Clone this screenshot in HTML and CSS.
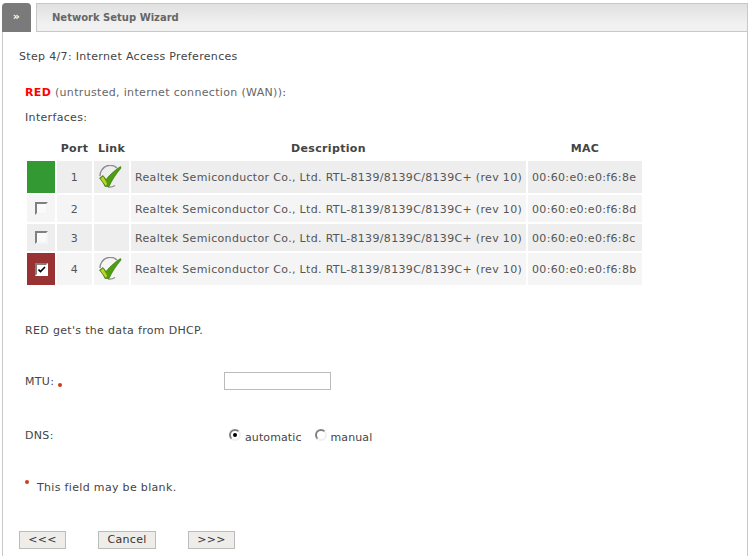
FILE: index.html
```html
<!DOCTYPE html>
<html lang="en">
<head>
<meta charset="utf-8">
<title>Network Setup Wizard</title>
<link rel="stylesheet" href="styles.css">
</head>
<body>
<div class="head">
  <div class="tab">»</div>
  <div class="title">Network Setup Wizard</div>
</div>
<main class="content">
  <p class="step">Step 4/7: Internet Access Preferences</p>
  <section class="zone">
    <p class="zone-title"><b class="red">RED</b> <span class="muted">(untrusted, internet connection (WAN))</span>:</p>
    <p class="ifaces">Interfaces:</p>
    <table class="nics">
      <thead>
        <tr><th class="c-sel"></th><th class="c-port">Port</th><th class="c-link">Link</th><th class="c-desc">Description</th><th class="c-mac">MAC</th></tr>
      </thead>
      <tbody>
        <tr class="odd tall">
          <td class="green"></td><td class="port">1</td>
          <td class="link"><svg class="ok" viewBox="0 0 24 24" width="24" height="24"><path d="M19 3A10 10 0 0 0 3.500 5.500 10 10 0 0 0 2 11M10 22a10 10 0 0 0 7-1.500" fill="none" stroke="#8c8c8c" stroke-width="1.400"/><path d="M1.500 13l3.500-2.500 3 4C12 9.500 17 5 22.500 1.500L23 3C18 9 14 15 11 21.500H7C5.500 18 3.500 15.500 1.500 13z" fill="#4f9e0b" stroke="#2f6a0a" stroke-width=".6"/><path d="M2.500 13.500l2.500-2 4 7-1 2.500z" fill="#c9d02a"/></svg></td>
          <td>Realtek Semiconductor Co., Ltd. RTL-8139/8139C/8139C+ (rev 10)</td><td>00:60:e0:e0:f6:8e</td>
        </tr>
        <tr class="even">
          <td class="sel"><span class="box"></span></td><td class="port">2</td><td class="link"></td>
          <td>Realtek Semiconductor Co., Ltd. RTL-8139/8139C/8139C+ (rev 10)</td><td>00:60:e0:e0:f6:8d</td>
        </tr>
        <tr class="odd">
          <td class="sel"><span class="box"></span></td><td class="port">3</td><td class="link"></td>
          <td>Realtek Semiconductor Co., Ltd. RTL-8139/8139C/8139C+ (rev 10)</td><td>00:60:e0:e0:f6:8c</td>
        </tr>
        <tr class="even tall">
          <td class="sel maroon"><span class="box on"><svg viewBox="0 0 8 8" width="8" height="8"><path d="M.5 4.500l2 2L7 2" fill="none" stroke="#000" stroke-width="1.600"/></svg></span></td><td class="port">4</td>
          <td class="link"><svg class="ok" viewBox="0 0 24 24" width="24" height="24"><path d="M19 3A10 10 0 0 0 3.500 5.500 10 10 0 0 0 2 11M10 22a10 10 0 0 0 7-1.500" fill="none" stroke="#8c8c8c" stroke-width="1.400"/><path d="M1.500 13l3.500-2.500 3 4C12 9.500 17 5 22.500 1.500L23 3C18 9 14 15 11 21.500H7C5.500 18 3.500 15.500 1.500 13z" fill="#4f9e0b" stroke="#2f6a0a" stroke-width=".6"/><path d="M2.500 13.500l2.500-2 4 7-1 2.500z" fill="#c9d02a"/></svg></td>
          <td>Realtek Semiconductor Co., Ltd. RTL-8139/8139C/8139C+ (rev 10)</td><td>00:60:e0:e0:f6:8b</td>
        </tr>
      </tbody>
    </table>
    <p class="dhcp">RED get's the data from DHCP.</p>
    <div class="row mtu">
      <label class="lbl">MTU: <i class="dot"></i></label>
      <span class="field"></span>
    </div>
    <div class="row dns">
      <label class="lbl">DNS:</label>
      <div class="radios">
        <span class="radio on"></span><span class="opt">automatic</span>
        <span class="radio"></span><span class="opt">manual</span>
      </div>
    </div>
    <p class="note"><i class="dot"></i><span>This field may be blank.</span></p>
  </section>
  <div class="buttons">
    <span class="btn b-prev">&lt;&lt;&lt;</span>
    <span class="btn b-cancel">Cancel</span>
    <span class="btn b-next">&gt;&gt;&gt;</span>
  </div>
</main>
</body>
</html>
```
FILE: styles.css
```css
html, body { margin: 0; padding: 0; background: #fff; }
body {
  width: 752px; height: 556px; overflow: hidden;
  font: 11px/14px "DejaVu Sans", sans-serif;
  letter-spacing: .33px;
  color: #444;
}
p { margin: 0; }
.head { display: flex; height: 29px; margin: 3px 4px 0 2px; }
.tab {
  width: 29px; background: #7a7a7a; color: #fff; border-radius: 4px 4px 0 0;
  text-align: center; font-weight: bold; font-size: 11px; line-height: 28px;
}
.title {
  flex: 1; margin-left: 5px; padding-left: 15px;
  border: 1px solid #c8c8c8;
  background: linear-gradient(#e0e0e0, #f1f1f1 75%);
  font-weight: bold; font-size: 10px; letter-spacing: 0; line-height: 27px; color: #666;
}
.content {
  margin: 0 4px 0 2px; height: 524px; box-sizing: border-box;
  border: 1px solid #c8c8c8; border-top: 0; border-bottom: 0;
  padding: 18px 0 0 16px;
}
.step { color: #444; }
.zone { padding: 22px 0 0 6px; }
.red { color: #f00; }
.muted { color: #666; }
.ifaces { margin-top: 11px; }
.nics { margin: 11px 0 0 0; border-collapse: separate; border-spacing: 2px; table-layout: fixed; width: 617px; }
.nics th { height: 21px; padding: 0; color: #444; text-align: center; vertical-align: middle; }
.c-sel { width: 28px; } .c-port { width: 35px; } .c-link { width: 35px; } .c-desc { width: 395px; } .c-mac { width: 114px; }
.nics td { box-sizing: border-box; height: 27px; padding: 2px 0 0 4px; color: #555; white-space: nowrap; }
.nics td.port { text-align: center; padding: 2px 0 0; }
.nics td.link, .nics td.sel, .nics td.green { padding: 0; }
.nics tr.tall td { height: 32px; }
.odd td { background: #eee; }
.even td { background: #f5f5f5; }
.nics td.green { background: #339933; }
.nics td.maroon { background: #993333; }
.ok { display: block; margin: 0 0 0 4px; }
.sel { vertical-align: middle; }
.box {
  display: flex; align-items: center; justify-content: center;
  width: 9px; height: 9px; margin: 0 0 0 8px;
  border: 2px solid #808080; border-right-color: #f4f4f4; border-bottom-color: #f4f4f4;
  background: #fafafa;
}
.box.on { background: #fff; border-right-color: #fff; border-bottom-color: #fff; }
.dhcp { margin-top: 37px; }
.row { display: flex; align-items: center; }
.lbl { width: 199px; }
.mtu { margin-top: 34px; align-items: flex-start; }
.mtu .lbl { margin-top: 3px; }
.field { display: block; width: 105px; height: 16px; border: 1px solid #bbb; background: #fff; }
.dns { margin-top: 39px; }
.radios { display: flex; align-items: center; padding: 0 0 0 5px; letter-spacing: .1px; position: relative; top: 2px; }
.radio {
  width: 8px; height: 8px; border-radius: 50%; position: relative; top: -3px;
  border: 2px solid #808080; border-right-color: #f0f0f0; border-bottom-color: #f0f0f0;
}
.radio.on::after {
  content: ""; position: absolute; left: 2px; top: 2px; width: 4px; height: 4px;
  border-radius: 50%; background: #000;
}
.opt { margin: 0 13px 0 4px; }
.dot {
  display: inline-block; width: 4px; height: 4px; border-radius: 50%;
  background: #c8401a; vertical-align: -2px;
}
.note { margin-top: 38px; display: flex; }
.note .dot { margin: -1px 8px 0 0; }
.buttons { display: flex; margin-top: 36px; }
.btn {
  display: block; box-sizing: border-box; height: 18px; line-height: 16px; text-align: center;
  border: 1px solid #bbb; background: #efedea; color: #333;
}
.b-prev { width: 47px; }
.b-cancel { width: 58px; margin-left: 32px; }
.b-next { width: 47px; margin-left: 32px; }
```
